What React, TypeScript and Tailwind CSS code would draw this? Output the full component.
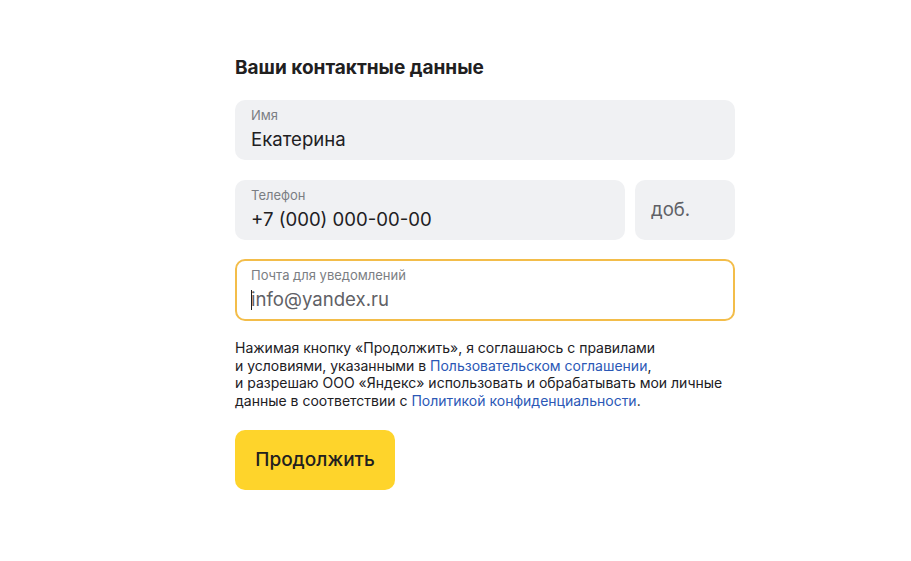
import { FC } from 'react';

const fontStack = { fontFamily: 'Inter, "Noto Sans", sans-serif' };

const Field: FC<{ label: string; value: string; className?: string }> = ({ label, value, className }) => (
  <div className={`h-[60px] rounded-[10px] bg-[#f0f1f3] px-4 pt-[6px] ${className ?? ''}`}>
    <div className="text-[13px] leading-[18px] text-[#7b7e83]">{label}</div>
    <div className="mt-[2px] text-[18.6px] leading-[26px] text-[#21201f]">{value}</div>
  </div>
);

const App: FC = () => {
  return (
    <div className="min-h-screen w-full bg-white" style={fontStack}>
      <div className="ml-[235px] w-[500px] pt-[56px]">
        {/* Heading */}
        <h1 className="text-[19px] font-bold leading-[24px] text-[#21201f]">Ваши контактные данные</h1>

        {/* Name */}
        <Field label="Имя" value="Екатерина" className="mt-[20px]" />

        {/* Phone + ext */}
        <div className="mt-[20px] flex gap-[10px]">
          <Field label="Телефон" value="+7 (000) 000-00-00" className="flex-1" />
          <div className="flex h-[60px] w-[100px] items-center rounded-[10px] bg-[#f0f1f3] px-4 text-[18.6px] text-[#5f6166]">
            доб.
          </div>
        </div>

        {/* Email (focused) */}
        <div className="mt-[19px] h-[62px] rounded-[10px] border-2 border-[#f3bd4a] bg-white px-[14px] pt-[5px]">
          <div className="text-[13px] leading-[18px] text-[#7b7e83]">Почта для уведомлений</div>
          <div className="relative mt-[2px] text-[18.6px] leading-[26px] text-[#5f6166]">
            <span className="absolute left-0 top-[4px] h-[20px] w-px bg-[#21201f]" />
            info@yandex.ru
          </div>
        </div>

        {/* Agreement */}
        <p className="mt-[18px] text-[14px] leading-[17.5px] text-[#21201f]">
          Нажимая кнопку «Продолжить», я соглашаюсь с правилами
          <br />
          и условиями, указанными в <a className="text-[#2b58b6]">Пользовательском соглашении</a>,
          <br />
          и разрешаю ООО «Яндекс» использовать и обрабатывать мои личные
          <br />
          данные в соответствии с <a className="text-[#2b58b6]">Политикой конфиденциальности</a>.
        </p>

        {/* Submit */}
        <button className="mt-[21px] h-[60px] w-[160px] rounded-[10px] bg-[#fed42b] text-[19px] font-medium text-[#21201f]">
          Продолжить
        </button>
      </div>
    </div>
  );
};

export default App;
